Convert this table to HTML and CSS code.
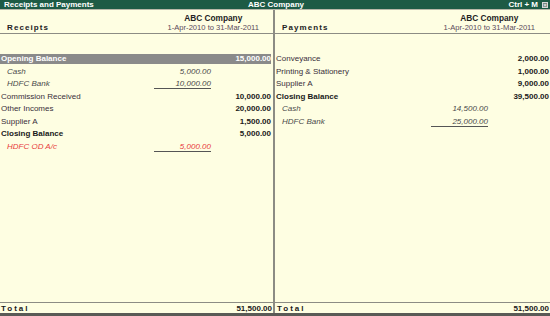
FILE: index.html
```html
<!DOCTYPE html>
<html>
<head>
<meta charset="utf-8">
<link rel="stylesheet" href="styles.css">
</head>
<body>
<div class="app">
  <div class="titlebar">
    <span class="t-left">Receipts and Payments</span>
    <span class="t-center">ABC Company</span>
    <span class="t-right">Ctrl + M <span class="closebox">&#215;</span></span>
  </div>
  <div class="panes">
    <section class="pane pane-left">
      <div class="head">
        <div class="head-label">Receipts</div>
        <div class="head-info">
          <div class="co">ABC Company</div>
          <div class="period">1-Apr-2010 to 31-Mar-2011</div>
        </div>
      </div>
      <div class="body">
        <div class="row sel"><span class="name">Opening Balance</span><span class="sub"></span><span class="amt">15,000.00</span></div>
        <div class="row item"><span class="name">Cash</span><span class="sub">5,000.00</span><span class="amt"></span></div>
        <div class="row item"><span class="name">HDFC Bank</span><span class="sub ul">10,000.00</span><span class="amt"></span></div>
        <div class="row"><span class="name">Commission Received</span><span class="sub"></span><span class="amt">10,000.00</span></div>
        <div class="row"><span class="name">Other Incomes</span><span class="sub"></span><span class="amt">20,000.00</span></div>
        <div class="row"><span class="name">Supplier A</span><span class="sub"></span><span class="amt">1,500.00</span></div>
        <div class="row strong"><span class="name">Closing Balance</span><span class="sub"></span><span class="amt">5,000.00</span></div>
        <div class="row item neg"><span class="name">HDFC OD A/c</span><span class="sub ul">5,000.00</span><span class="amt"></span></div>
      </div>
      <div class="total"><span class="total-label">Total</span><span class="total-amt">51,500.00</span></div>
    </section>
    <section class="pane pane-right">
      <div class="head">
        <div class="head-label">Payments</div>
        <div class="head-info">
          <div class="co">ABC Company</div>
          <div class="period">1-Apr-2010 to 31-Mar-2011</div>
        </div>
      </div>
      <div class="body">
        <div class="row"><span class="name">Conveyance</span><span class="sub"></span><span class="amt">2,000.00</span></div>
        <div class="row"><span class="name">Printing &amp; Stationery</span><span class="sub"></span><span class="amt">1,000.00</span></div>
        <div class="row"><span class="name">Supplier A</span><span class="sub"></span><span class="amt">9,000.00</span></div>
        <div class="row strong"><span class="name">Closing Balance</span><span class="sub"></span><span class="amt">39,500.00</span></div>
        <div class="row item"><span class="name">Cash</span><span class="sub">14,500.00</span><span class="amt"></span></div>
        <div class="row item"><span class="name">HDFC Bank</span><span class="sub ul">25,000.00</span><span class="amt"></span></div>
      </div>
      <div class="total"><span class="total-label">Total</span><span class="total-amt">51,500.00</span></div>
    </section>
  </div>
  <div class="statusbar"></div>
</div>
</body>
</html>
```
FILE: styles.css
```css
* { box-sizing: border-box; }
html, body { margin: 0; padding: 0; }
body {
  width: 550px;
  height: 316px;
  overflow: hidden;
  font-family: "Liberation Sans", Arial, sans-serif;
  font-size: 8px;
  color: #2a2a2a;
  background: #fefee2;
}
.app {
  width: 550px;
  height: 316px;
  display: flex;
  flex-direction: column;
}
.titlebar {
  height: 10px;
  flex: none;
  background: #1d5b45;
  border-bottom: 1px solid #b8b8a8;
  color: #fff;
  font-weight: bold;
  font-size: 8px;
  line-height: 9px;
  display: grid;
  grid-template-columns: 1fr auto 1fr;
  padding: 0 2px 0 4px;
}
.t-center { text-align: center; }
.t-right {
  display: flex;
  justify-content: flex-end;
  align-items: center;
  gap: 4px;
}
.closebox {
  width: 6px;
  height: 6px;
  border: 1px solid #d8d8d8;
  background: #7a8a84;
  color: #fff;
  font-size: 6px;
  line-height: 4px;
  text-align: center;
  font-weight: normal;
}
.panes {
  flex: 1;
  display: grid;
  grid-template-columns: 275px 275px;
  min-height: 0;
}
.pane {
  display: flex;
  flex-direction: column;
  min-height: 0;
}
.pane-left { border-right: 2px solid #8c8c84; }
.head {
  height: 24px;
  flex: none;
  border-bottom: 1px solid #8c8c84;
  display: flex;
  justify-content: space-between;
  align-items: flex-end;
  padding: 0 15px 0 7px;
}
.pane-left .head { padding-right: 14px; }
.head-label {
  font-weight: bold;
  font-size: 8px;
  letter-spacing: 1.1px;
  color: #222;
  line-height: 10px;
}
.head-info {
  text-align: center;
  line-height: 9px;
  padding-bottom: 1px;
}
.co { font-weight: bold; color: #222; font-size: 8.3px; }
.period { color: #5a4a5a; font-size: 7.6px; }
.body {
  flex: 1;
  display: flex;
  flex-direction: column;
  gap: 2.5px;
  padding-top: 20px;
}
.row {
  height: 10px;
  line-height: 10px;
  display: grid;
  grid-template-columns: 1fr 57px 62px;
  padding-left: 1px;
  color: #3a2e3a;
}
.pane-left .row .amt { padding-right: 2px; }
.pane-right .row .amt { padding-right: 1px; }
.sub, .amt { text-align: right; }
.amt { font-weight: bold; color: #1a1a1a; }
.row.sel {
  background: #8a8a8a;
  color: #fff;
  font-weight: bold;
  margin-right: 2px;
}
.row.sel .amt { color: #fff; padding-right: 0; }
.row.strong .name { font-weight: bold; color: #1a1a1a; }
.row.item { font-style: italic; color: #4a4a4a; }
.row.item .name { padding-left: 6px; }
.sub.ul { border-bottom: 1px solid #555; line-height: 9px; }
.row.neg { color: #e83c3c; }
.total {
  height: 11px;
  flex: none;
  border-top: 1px solid #8c8c84;
  display: flex;
  justify-content: space-between;
  align-items: center;
  padding: 0 1px 0 1px;
  font-weight: bold;
  color: #1a1a1a;
}
.pane-right .total { padding-left: 2px; }
.total-label { letter-spacing: 2px; font-size: 8px; }
.statusbar {
  height: 3px;
  flex: none;
  background: #5a5a56;
}
```
